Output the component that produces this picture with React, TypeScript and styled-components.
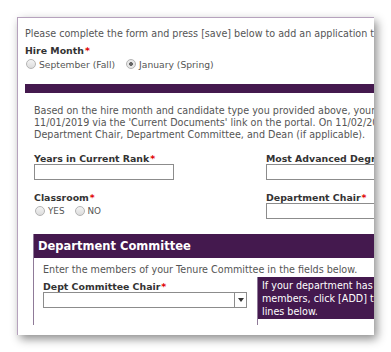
import styled, { createGlobalStyle } from 'styled-components';

const GlobalStyle = createGlobalStyle`
  html, body {
    margin: 0;
    padding: 0;
    background: #fff;
  }
  body {
    font-family: 'DejaVu Sans', Verdana, sans-serif;
    font-size: 9.6px;
    color: #555;
  }
`;

const Page = styled.div`
  width: 391px;
  height: 352px;
  padding: 17px 0 0 17px;
  box-sizing: border-box;
  overflow: hidden;
`;

const Panel = styled.div`
  width: 357px;
  height: 318px;
  box-sizing: border-box;
  background: #fff;
  border-top: 1px solid #b6a2bd;
  border-left: 1px solid #b6a2bd;
  box-shadow: 3px 4px 9px rgba(0, 0, 0, 0.45);
  padding: 0 0 0 7px;
  overflow: hidden;
`;

const Viewport = styled.div`
  width: 600px;
  height: 310px;
  padding-top: 10px;
  box-sizing: border-box;
  overflow: hidden;
`;

const Text = styled.div`
  line-height: 12px;
  white-space: nowrap;
`;

const Label = styled.div`
  font-weight: bold;
  font-size: 9.4px;
  color: #333;
  line-height: 10px;
  white-space: nowrap;
`;

const Req = styled.span`
  color: #e00000;
  margin-left: 1px;
`;

const RadioRow = styled.div<{ $gap?: number }>`
  display: flex;
  align-items: center;
  gap: ${(p) => p.$gap ?? 11}px;
  height: 14px;
  margin-top: 1px;
  padding-left: 1px;
`;

const RadioOption = styled.label<{ $small?: boolean }>`
  display: flex;
  align-items: center;
  gap: 3px;
  font-size: ${(p) => (p.$small ? '8.8px' : '9.2px')};
  white-space: nowrap;
`;

const RadioDot = styled.span<{ $on?: boolean }>`
  width: 8px;
  height: 8px;
  border-radius: 50%;
  border: 1px solid #b4b4b4;
  background: ${(p) =>
    p.$on
      ? 'radial-gradient(circle, #666 0 1.6px, #e8e8e8 2.2px)'
      : 'linear-gradient(#f4f4f4, #dcdcdc)'};
`;

const Section = styled.div`
  margin: 13px 0 0 -1px;
  border-left: 1px solid #b09ab8;
`;

const SectionBar = styled.div`
  height: 9px;
  background: #44194e;
`;

const SectionBody = styled.div`
  padding: 12px 0 0 9px;
`;

const FieldGrid = styled.div`
  display: grid;
  grid-template-columns: 232px 1fr;
  row-gap: 13px;
  margin-top: 13px;
`;

const Field = styled.div`
  display: flex;
  flex-direction: column;
`;

const Input = styled.div<{ $w: number }>`
  width: ${(p) => p.$w}px;
  height: 16px;
  box-sizing: border-box;
  border: 1px solid #8c8c8c;
  background: #fff;
`;

const Committee = styled.div`
  margin: 15px 0 0 -1px;
  border-left: 1px solid #8f7a98;
`;

const CommitteeHeader = styled.div`
  height: 24px;
  display: flex;
  align-items: center;
  padding-left: 4px;
  background: #44194e;
  color: #fff;
  font-weight: bold;
  font-size: 11.5px;
`;

const CommitteeBody = styled.div`
  padding: 6px 0 0 9px;
`;

const ChairRow = styled.div`
  display: flex;
  gap: 10px;
  margin-top: 6px;
`;

const SelectBox = styled.div`
  width: 204px;
  height: 16px;
  box-sizing: border-box;
  border: 1px solid #8c8c8c;
  display: flex;
  justify-content: flex-end;
`;

const SelectArrow = styled.div`
  width: 11px;
  border-left: 1px solid #8c8c8c;
  display: flex;
  align-items: center;
  justify-content: center;
  &::after {
    content: '';
    border-left: 3px solid transparent;
    border-right: 3px solid transparent;
    border-top: 4px solid #333;
  }
`;

const NoteCell = styled.div`
  width: 200px;
  height: 48px;
  margin-top: -5px;
  border-left: 1px solid #8f7a98;
`;

const NoteBox = styled.div`
  background: #44194e;
  color: #fff;
  padding: 2px 0 1px 4px;
  line-height: 13px;
  white-space: nowrap;
`;

export default function App() {
  return (
    <>
      <GlobalStyle />
      <Page>
        <Panel>
          <Viewport>
            <Text>
              Please complete the form and press [save] below to add an application to the system.
            </Text>
            <Label style={{ marginTop: 6 }}>
              Hire Month<Req>*</Req>
            </Label>
            <RadioRow>
              <RadioOption>
                <RadioDot />
                September (Fall)
              </RadioOption>
              <RadioOption>
                <RadioDot $on />
                January (Spring)
              </RadioOption>
            </RadioRow>

            <Section>
              <SectionBar />
              <SectionBody>
                <Text>
                  Based on the hire month and candidate type you provided above, your application
                  <br />
                  11/01/2019 via the 'Current Documents' link on the portal. On 11/02/2019
                  <br />
                  Department Chair, Department Committee, and Dean (if applicable).
                </Text>
                <FieldGrid>
                  <Field>
                    <Label>
                      Years in Current Rank<Req>*</Req>
                    </Label>
                    <Input $w={140} />
                  </Field>
                  <Field>
                    <Label>Most Advanced Degree</Label>
                    <Input $w={200} />
                  </Field>
                  <Field>
                    <Label>
                      Classroom<Req>*</Req>
                    </Label>
                    <RadioRow $gap={10}>
                      <RadioOption $small>
                        <RadioDot />
                        YES
                      </RadioOption>
                      <RadioOption $small>
                        <RadioDot />
                        NO
                      </RadioOption>
                    </RadioRow>
                  </Field>
                  <Field>
                    <Label>
                      Department Chair<Req>*</Req>
                    </Label>
                    <Input $w={200} />
                  </Field>
                </FieldGrid>

                <Committee>
                  <CommitteeHeader>Department Committee</CommitteeHeader>
                  <CommitteeBody>
                    <Text>Enter the members of your Tenure Committee in the fields below.</Text>
                    <ChairRow>
                      <Field>
                        <Label>
                          Dept Committee Chair<Req>*</Req>
                        </Label>
                        <SelectBox>
                          <SelectArrow />
                        </SelectBox>
                      </Field>
                      <NoteCell>
                        <NoteBox>
                          If your department has additional
                          <br />
                          members, click [ADD] to create
                          <br />
                          lines below.
                        </NoteBox>
                      </NoteCell>
                    </ChairRow>
                  </CommitteeBody>
                </Committee>
              </SectionBody>
            </Section>
          </Viewport>
        </Panel>
      </Page>
    </>
  );
}
